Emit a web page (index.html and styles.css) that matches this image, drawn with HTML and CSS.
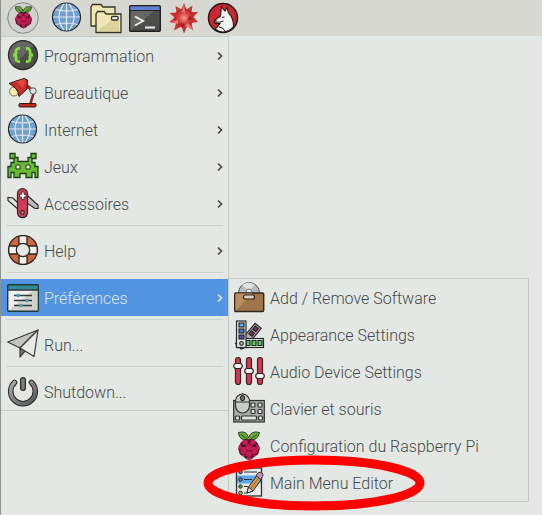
FILE: index.html
```
<!DOCTYPE html>
<html lang="fr">
<head>
    <meta charset="UTF-8">
    <meta name="viewport" content="width=device-width, initial-scale=1.0">
    <title>Menu Raspberry Pi</title>
    <link rel="stylesheet" href="styles.css">
</head>
<body>
    <!-- icons used more than once -->
    <svg class="defs" width="0" height="0" aria-hidden="true">
        <defs>
            <linearGradient id="gray" x1="0" y1="0" x2="1" y2="1">
                <stop offset="0.5" stop-color="#666765"/>
                <stop offset="0.5" stop-color="#4d4e4c"/>
            </linearGradient>
            <linearGradient id="metal" x1="0" y1="0" x2="1" y2="1">
                <stop offset="0" stop-color="#aaa"/>
                <stop offset="1" stop-color="#555"/>
            </linearGradient>
            <radialGradient id="spike">
                <stop offset="0" stop-color="#f29c96"/>
                <stop offset="0.5" stop-color="#dc4a46"/>
                <stop offset="1" stop-color="#b8242a"/>
            </radialGradient>
        </defs>
        <symbol id="globe" viewBox="0 0 32 32">
            <circle cx="15.500" cy="15" r="14" fill="#739fcf" stroke="#20252c" stroke-width="1.2"/>
            <path d="M15.500 1.500v27M2 15h27M4.500 7.500q11 3 22 0M4.500 22.500q11-3 22 0M13 1.800q-10 13 0 26.400M18 1.800q10 13 0 26.400" fill="none" stroke="#dfe9f2" stroke-width="1.200"/>
        </symbol>
        <symbol id="raspberry" viewBox="0 0 32 32">
            <path d="M15.500 10Q6 11 5.500 2.500Q14 0 15.500 8Q18 0 26.500 2.500Q25 11 16 10z" fill="#68a63e" stroke="#29431c"/>
            <path d="M8 4.500l7 5M24 4.500l-7 5" stroke="#345923" fill="none"/>
            <path d="M16 9.500q4-1.500 6 1.500q3 1 3 4q3 3 1 6q0 4-4 5q-2 3-6 4q-4-1-6-4q-4-1-4-5q-2-3 1-6q0-3 3-4q2-3 6-1.500z" fill="#4a1029"/>
            <g fill="#c21c54">
                <ellipse cx="12" cy="12.500" rx="3.100" ry="2.400"/><ellipse cx="20" cy="12.500" rx="3.100" ry="2.400"/>
                <circle cx="16" cy="17.300" r="3.400"/>
                <ellipse cx="10.500" cy="20.500" rx="3.200" ry="3.800"/><ellipse cx="21.500" cy="20.500" rx="3.200" ry="3.800"/>
                <ellipse cx="16" cy="24" rx="3.300" ry="2.900"/>
                <ellipse cx="7.300" cy="17" rx="1.600" ry="2.700"/><ellipse cx="24.700" cy="17" rx="1.600" ry="2.700"/>
                <ellipse cx="16" cy="28.300" rx="2.700" ry="1.100"/>
                <ellipse cx="10.500" cy="25.600" rx="1.800" ry="1"/><ellipse cx="21.500" cy="25.600" rx="1.800" ry="1"/>
            </g>
        </symbol>
        <symbol id="chevron" viewBox="0 0 6 10">
            <path d="M1 1.500L4.500 5L1 8.500" fill="none" stroke="currentColor" stroke-width="1.700"/>
        </symbol>
    </svg>

    <header class="taskbar">
        <button class="launcher menu-launcher" aria-label="Menu">
            <svg viewBox="0 0 32 32">
                <circle cx="16" cy="16" r="15.300" fill="#d0d2cf" stroke="#858785"/>
                <use href="#raspberry" x="4" y="3" width="25" height="25"/>
            </svg>
        </button>
        <button class="launcher" aria-label="Navigateur"><svg><use href="#globe"/></svg></button>
        <button class="launcher" aria-label="Fichiers">
            <svg viewBox="0 0 32 32" fill="#f0e7b4" stroke="#35342a" stroke-width="1.300">
                <path d="M1 24V5l1.500-2.500H11L13 5h12v19z"/>
                <path d="M6 29.500V12l1.500-2.500H14l2 2.500h15v18.500H6z"/>
                <path d="M8 28L29 14v15H8z" fill="#dcd29c" stroke="none"/>
                <rect x="21.500" y="14.500" width="6.500" height="3.500" rx="1" fill="#fff"/>
            </svg>
        </button>
        <button class="launcher" aria-label="Terminal">
            <svg viewBox="0 0 32 32">
                <rect x="0.700" y="3.700" width="30.600" height="25.600" rx="1" fill="url(#gray)" stroke="#222" stroke-width="1.400"/>
                <path d="M1.500 4.500h29V8h-29z" fill="#6280d6"/>
                <path d="M1 8.500h30" stroke="#222"/>
                <path d="M6 14.500l8 4.500l-8 4.500M16 25.500h10" fill="none" stroke="#eee" stroke-width="2"/>
            </svg>
        </button>
        <button class="launcher" aria-label="Mathematica">
            <svg viewBox="0 0 32 32">
                <path d="M16 1l2.500 6.500L24.500 3.500l-1 6.500l6.500 0l-4.500 5L30 20l-6.500 1l1.500 7l-6-3.500L16 31.500l-2.500-7L6 28.500l2-7L1.500 20l5-4.500L1.500 11l7-.5L7.500 4l6 3.500z" fill="#c63734"/>
                <circle cx="16" cy="16" r="9.500" fill="url(#spike)"/>
                <path d="M16 3l1 8l-3-1zM25 27l-5-6l-3 3zM4 20l6-2v4z" fill="#e87d77"/>
                <path d="M21 13l3 4l-4 2zM12 21l5 1l-3 4z" fill="#a41d25"/>
            </svg>
        </button>
        <button class="launcher" aria-label="Wolfram">
            <svg viewBox="0 0 32 32">
                <circle cx="16" cy="16" r="14.500" fill="#cb2730" stroke="#22181a" stroke-width="1.500"/>
                <path d="M8 27Q11 25 13 21.500Q9 22 7 20.500L8 18L13.500 14L14.500 5L18 9L20 5.500L21.500 11Q27 17 26.500 25Q17 34 8 27z" fill="#f4f4f2" stroke="#22181a" stroke-width="1.100"/>
                <path d="M7.500 20q5 1 9-1M15 15.500l2.500-.5M12 25q4 0 6 4" fill="none" stroke="#22181a"/>
                <path d="M7 18.500l2.500-1v2z" fill="#22181a"/>
            </svg>
        </button>
    </header>

    <nav class="menu">
        <button class="item">
            <svg class="icon" viewBox="0 0 32 32">
                <circle cx="16" cy="15" r="14.500" fill="url(#gray)" stroke="#2b2c2a" stroke-width="1.300"/>
                <path d="M13 8.500q-4-.5-4 3v1.500q0 2-3 2q3 0 3 2v1.500q0 3.500 4 3M19 8.500q4-.5 4 3v1.500q0 2 3 2q-3 0-3 2v1.500q0 3.500-4 3" fill="none" stroke="#80e334" stroke-width="2.800"/>
            </svg>
            <span class="label">Programmation</span>
            <svg class="arrow"><use href="#chevron"/></svg>
        </button>
        <button class="item">
            <svg class="icon" viewBox="0 0 32 32" stroke="#3b1715">
                <circle cx="7" cy="14.500" r="4.500" fill="#f6eeb0" stroke="#77704c"/>
                <path d="M27 15l-4 13" stroke="#8d221e" stroke-width="2.500"/>
                <path d="M19 8l7 6" stroke="#9f2923" stroke-width="3"/>
                <path d="M2 6.500L9 4L17 1.500L20.500 3L20 12L12 19.500Q11 11 2 6.500z" fill="#c62d28"/>
                <path d="M9 4.500L17 2L19 3.500L16 11z" fill="#e2453c" stroke="none"/>
                <circle cx="26" cy="14" r="3.200" fill="#e2e3e0" stroke="#555"/>
                <rect x="12" y="26.500" width="17" height="3.500" rx="1" fill="#b62d27"/>
            </svg>
            <span class="label">Bureautique</span>
            <svg class="arrow"><use href="#chevron"/></svg>
        </button>
        <button class="item">
            <svg class="icon"><use href="#globe"/></svg>
            <span class="label">Internet</span>
            <svg class="arrow"><use href="#chevron"/></svg>
        </button>
        <button class="item">
            <svg class="icon" viewBox="0 0 32 32">
                <path d="M3 2.500h5v4h3v4h10v-4h3v-4h5v5h-4v4h3v4h3v11h-3v-5h-3v5h-6v-4h-6v4H7v-5H4v5H1v-11h3v-4h3v-4H3z" fill="#66bd31" stroke="#20391a" stroke-width="1.300"/>
                <path d="M9 14h4v4H9zM19 14h4v4h-4z" fill="#eef2e8" stroke="#20391a"/>
            </svg>
            <span class="label">Jeux</span>
            <svg class="arrow"><use href="#chevron"/></svg>
        </button>
        <button class="item">
            <svg class="icon" viewBox="0 0 32 32" stroke="#2b2829" stroke-width="1.200">
                <path d="M12 22L1 12.500v-3l5 .5l6 6z" fill="#e5e7e5"/>
                <path d="M17 4.500L31 17v3.500h-3L17 13z" fill="#b9bcba"/>
                <rect x="10.500" y="0.700" width="10" height="29" rx="5" fill="#cf3d55"/>
                <path d="M14.500 4h2.500v2.500h2v2.500h-2v2.500h-2.500V9h-2V6.500h2z" fill="#fff" stroke-width="0.800"/>
                <circle cx="15.500" cy="24.500" r="1.800" fill="#db8490"/>
            </svg>
            <span class="label">Accessoires</span>
            <svg class="arrow"><use href="#chevron"/></svg>
        </button>
        <hr class="separator">
        <button class="item">
            <svg class="icon" viewBox="0 1 32 32">
                <circle cx="16" cy="16" r="10.500" fill="none" stroke="#d1673c" stroke-width="8"/>
                <path d="M12 2.500h8v7h-8zM12 22.500h8v7h-8zM2.500 12h7v8h-7zM22.500 12h7v8h-7z" fill="#f1f2ef"/>
                <path d="M12 2v8M20 2v8M12 22v8M20 22v8M2 12h8M2 20h8M22 12h8M22 20h8" stroke="#292522" stroke-width="1.300"/>
                <circle cx="16" cy="16" r="14.500" fill="none" stroke="#292522" stroke-width="1.200"/>
                <circle cx="16" cy="16" r="6.700" fill="none" stroke="#292522" stroke-width="1.200"/>
            </svg>
            <span class="label">Help</span>
            <svg class="arrow"><use href="#chevron"/></svg>
        </button>
        <hr class="separator">
        <div class="submenu-holder">
            <button class="item selected" aria-expanded="true">
                <svg class="icon" viewBox="0 0 32 32">
                    <rect x="0.700" y="2.700" width="30.600" height="26.600" rx="1" fill="#eeefec"/>
                    <path d="M1 29L30 5v24z" fill="#d0d1cd"/>
                    <path d="M1 3h30v5H1z" fill="#328c98"/>
                    <rect x="0.700" y="2.700" width="30.600" height="26.600" rx="1" fill="none" stroke="#20383c" stroke-width="1.400"/>
                    <path d="M1 8h30M7 13.500h18M7 18.500h18M7 23.500h18" stroke="#33393a" stroke-width="1.300"/>
                    <g fill="#3f9fae"><circle cx="11" cy="13.500" r="1.700"/><circle cx="20" cy="18.500" r="1.700"/><circle cx="14" cy="23.500" r="1.700"/></g>
                </svg>
                <span class="label">Préférences</span>
                <svg class="arrow"><use href="#chevron"/></svg>
            </button>

            <div class="submenu">
                <button class="item">
                    <svg class="icon" viewBox="0 0 32 32">
                        <circle cx="16" cy="11" r="10.500" fill="#b9bdbd" stroke="#555"/>
                        <path d="M16 9L9 3q7-5 13 0z" fill="#dfe2e1"/>
                        <circle cx="16" cy="10" r="3" fill="#eee" stroke="#777"/>
                        <rect x="1.700" y="11" width="29" height="18.500" rx="1" fill="#9d764c" stroke="#33261a" stroke-width="1.400"/>
                        <path d="M2.500 28.500v-17h17z" fill="#b88f60"/>
                        <rect x="10.500" y="13" width="11" height="4" rx="2" fill="#d9cfbd" stroke="#33261a" stroke-width="1.200"/>
                    </svg>
                    <span class="label">Add / Remove Software</span>
                </button>
                <button class="item">
                    <svg class="icon" viewBox="0 0 32 32" stroke="#252a2a" stroke-width="1.200">
                        <path d="M2 24l6 6l5-2" fill="#89a27c"/>
                        <g transform="rotate(40 20 13)">
                            <rect x="16" y="5" width="8" height="17" fill="#c8a8b8"/>
                            <path d="M18 7h4v4h-4zM18 13h4v4h-4z" fill="#822f59"/>
                        </g>
                        <rect x="3.500" y="19.500" width="27" height="9" fill="#d9ead4"/>
                        <path d="M13 21.500h4v5h-4zM19 21.500h4v5h-4zM25 21.500h4v5h-4z" fill="#53cb58"/>
                        <rect x="3.500" y="2" width="9.500" height="26.500" fill="#e6e9eb"/>
                        <rect x="6" y="4" width="5" height="4" fill="#66aee2"/>
                        <rect x="6" y="10" width="5" height="4" fill="#4c75c5"/>
                        <rect x="6" y="16" width="5" height="4" fill="#5952a5"/>
                        <circle cx="8.500" cy="24.500" r="1.800" fill="#c1c8ad"/>
                    </svg>
                    <span class="label">Appearance Settings</span>
                </button>
                <button class="item">
                    <svg class="icon" viewBox="0 0 32 32" stroke="#352326" stroke-width="1.200">
                        <g fill="#d8364f">
                            <rect x="2.500" y="1.500" width="5" height="27" rx="2.500"/>
                            <rect x="13.500" y="1.500" width="5" height="27" rx="2.500"/>
                            <rect x="24.500" y="1.500" width="5" height="27" rx="2.500"/>
                        </g>
                        <g fill="#f2f3f1">
                            <rect x="0.700" y="7.500" width="8.600" height="5" rx="2.500"/>
                            <rect x="11.700" y="12.500" width="8.600" height="5" rx="2.500"/>
                            <rect x="22.700" y="17.500" width="8.600" height="5" rx="2.500"/>
                        </g>
                    </svg>
                    <span class="label">Audio Device Settings</span>
                </button>
                <button class="item">
                    <svg class="icon" viewBox="0 1 32 32" stroke="#2e302e" stroke-width="1.200">
                        <rect x="0.700" y="8.500" width="30.600" height="21.500" fill="#a9aba8"/>
                        <g fill="#e0e2df">
                            <rect x="18" y="11" width="4" height="4" rx="1"/><rect x="25" y="11" width="4" height="4" rx="1"/>
                            <rect x="18" y="17.500" width="4" height="4" rx="1"/><rect x="25" y="17.500" width="4" height="4" rx="1"/>
                            <rect x="2.500" y="24" width="4" height="4" rx="1"/><rect x="8.500" y="24" width="15" height="4" rx="1"/><rect x="25.500" y="24" width="4" height="4" rx="1"/>
                        </g>
                        <rect x="2.500" y="2" width="14" height="19" rx="7" fill="#c9cbc8"/>
                        <path d="M3 10h13M9.500 2V0" fill="none"/>
                        <ellipse cx="9.500" cy="6" rx="2" ry="2.500" fill="#747673"/>
                    </svg>
                    <span class="label">Clavier et souris</span>
                </button>
                <button class="item">
                    <svg class="icon"><use href="#raspberry"/></svg>
                    <span class="label">Configuration du Raspberry Pi</span>
                </button>
                <button class="item">
                    <svg class="icon" viewBox="0 0 32 32" stroke="#292d34">
                        <rect x="3.500" y="1" width="25" height="28" fill="#e8ece9" stroke-width="1.300"/>
                        <path d="M4 8.500h24v8H4z" fill="#5da7e4" stroke="none"/>
                        <path d="M11 5h13M11 12.500h8M11 19.500h4M11 26h3"/>
                        <circle cx="7.500" cy="5" r="1.800" fill="#a45069"/><circle cx="7.500" cy="12.500" r="1.800" fill="#6f6ac4"/>
                        <circle cx="7.500" cy="19.500" r="1.800" fill="#55a43a"/><circle cx="7.500" cy="26" r="1.800" fill="#99c43a"/>
                        <path d="M14 26l1.500-6L24 8.500l4.500 3.500L20 24z" fill="#d19a4f"/>
                        <path d="M17.500 22L26 10.500" stroke="#8f6638"/>
                        <path d="M14 26l1.500-6l4.500 4z" fill="#f2dfbd"/>
                        <path d="M23 8.500l2.500-3q2-1 4 1q1 1.500 0 3l-2 3z" fill="#c791ba"/>
                    </svg>
                    <span class="label">Main Menu Editor</span>
                    <!-- red ring drawn over the entry -->
                    <svg class="highlight" viewBox="0 0 222 56" aria-hidden="true">
                        <ellipse cx="111" cy="28" rx="106" ry="23" fill="none" stroke="#fe0000" stroke-width="9"/>
                    </svg>
                </button>
            </div>
        </div>
        <hr class="separator">
        <button class="item">
            <svg class="icon" viewBox="0 1 32 32" stroke="#3a3c3a" stroke-width="1.200" stroke-linejoin="round">
                <path d="M13 20v9l5-6z" fill="#777977"/>
                <path d="M31 2L0.700 14L13 20z" fill="#c2c4c1"/>
                <path d="M31 2L13 20l14 8.500z" fill="#e7e9e6"/>
            </svg>
            <span class="label">Run...</span>
        </button>
        <hr class="separator">
        <button class="item">
            <svg class="icon" viewBox="0 1 32 32" fill="none" stroke-linecap="round">
                <path d="M7.500 7.500A12.300 12.300 0 1 0 24.500 7.500" stroke="#282a28" stroke-width="5.600"/>
                <path d="M7.500 7.500A12.300 12.300 0 1 0 24.500 7.500" stroke="url(#metal)" stroke-width="3.600"/>
                <path d="M16 5v8" stroke="#282a28" stroke-width="6"/>
                <path d="M16 5v8" stroke="#7b7d7b" stroke-width="3.600"/>
            </svg>
            <span class="label">Shutdown...</span>
        </button>
    </nav>
</body>
</html>
```

FILE: styles.css
```
* {
    margin: 0;
    padding: 0;
    box-sizing: border-box;
}
body {
    min-height: 100vh;
    background: #e4e8e4;
    border-left: 1px solid #8b918e;
    color: #454949;
    font-family: Roboto, "Liberation Sans", sans-serif;
    font-size: 16px;
    font-weight: 300;
}
button {
    background: none;
    border: none;
    color: inherit;
    font: inherit;
    cursor: pointer;
}
.defs {
    position: absolute;
}
.taskbar {
    display: flex;
    align-items: center;
    gap: 7px;
    height: 36px;
    padding-left: 6px;
    background: #d7d8d2;
}
.launcher,
.launcher svg {
    display: block;
    width: 32px;
    height: 32px;
}
.menu-launcher {
    margin-right: 5px;
}
.menu {
    width: 228px;
    border: 1px solid #c9cdca;
    border-left: none;
}
.item {
    display: flex;
    align-items: center;
    gap: 5px;
    position: relative;
    width: 100%;
    height: 37px;
    padding: 0 5px 0 6px;
    text-align: left;
    white-space: nowrap;
}
.item.selected {
    background: #5294e2;
    color: #dde9f5;
}
.icon {
    flex: none;
    width: 32px;
    height: 32px;
}
.label {
    flex: 1;
    padding-top: 2px;
}
.arrow {
    width: 6px;
    height: 10px;
}
.separator {
    height: 1px;
    margin: 3px 5px 6px;
    border: none;
    background: #ced3d0;
}
.submenu-holder {
    position: relative;
}
.submenu {
    position: absolute;
    top: -1px;
    left: 100%;
    width: 301px;
    border: 1px solid #c6cac7;
}
.submenu .item {
    padding-left: 4px;
}
.highlight {
    position: absolute;
    top: -9px;
    left: -26px;
    width: 222px;
    height: 56px;
    pointer-events: none;
}
```
